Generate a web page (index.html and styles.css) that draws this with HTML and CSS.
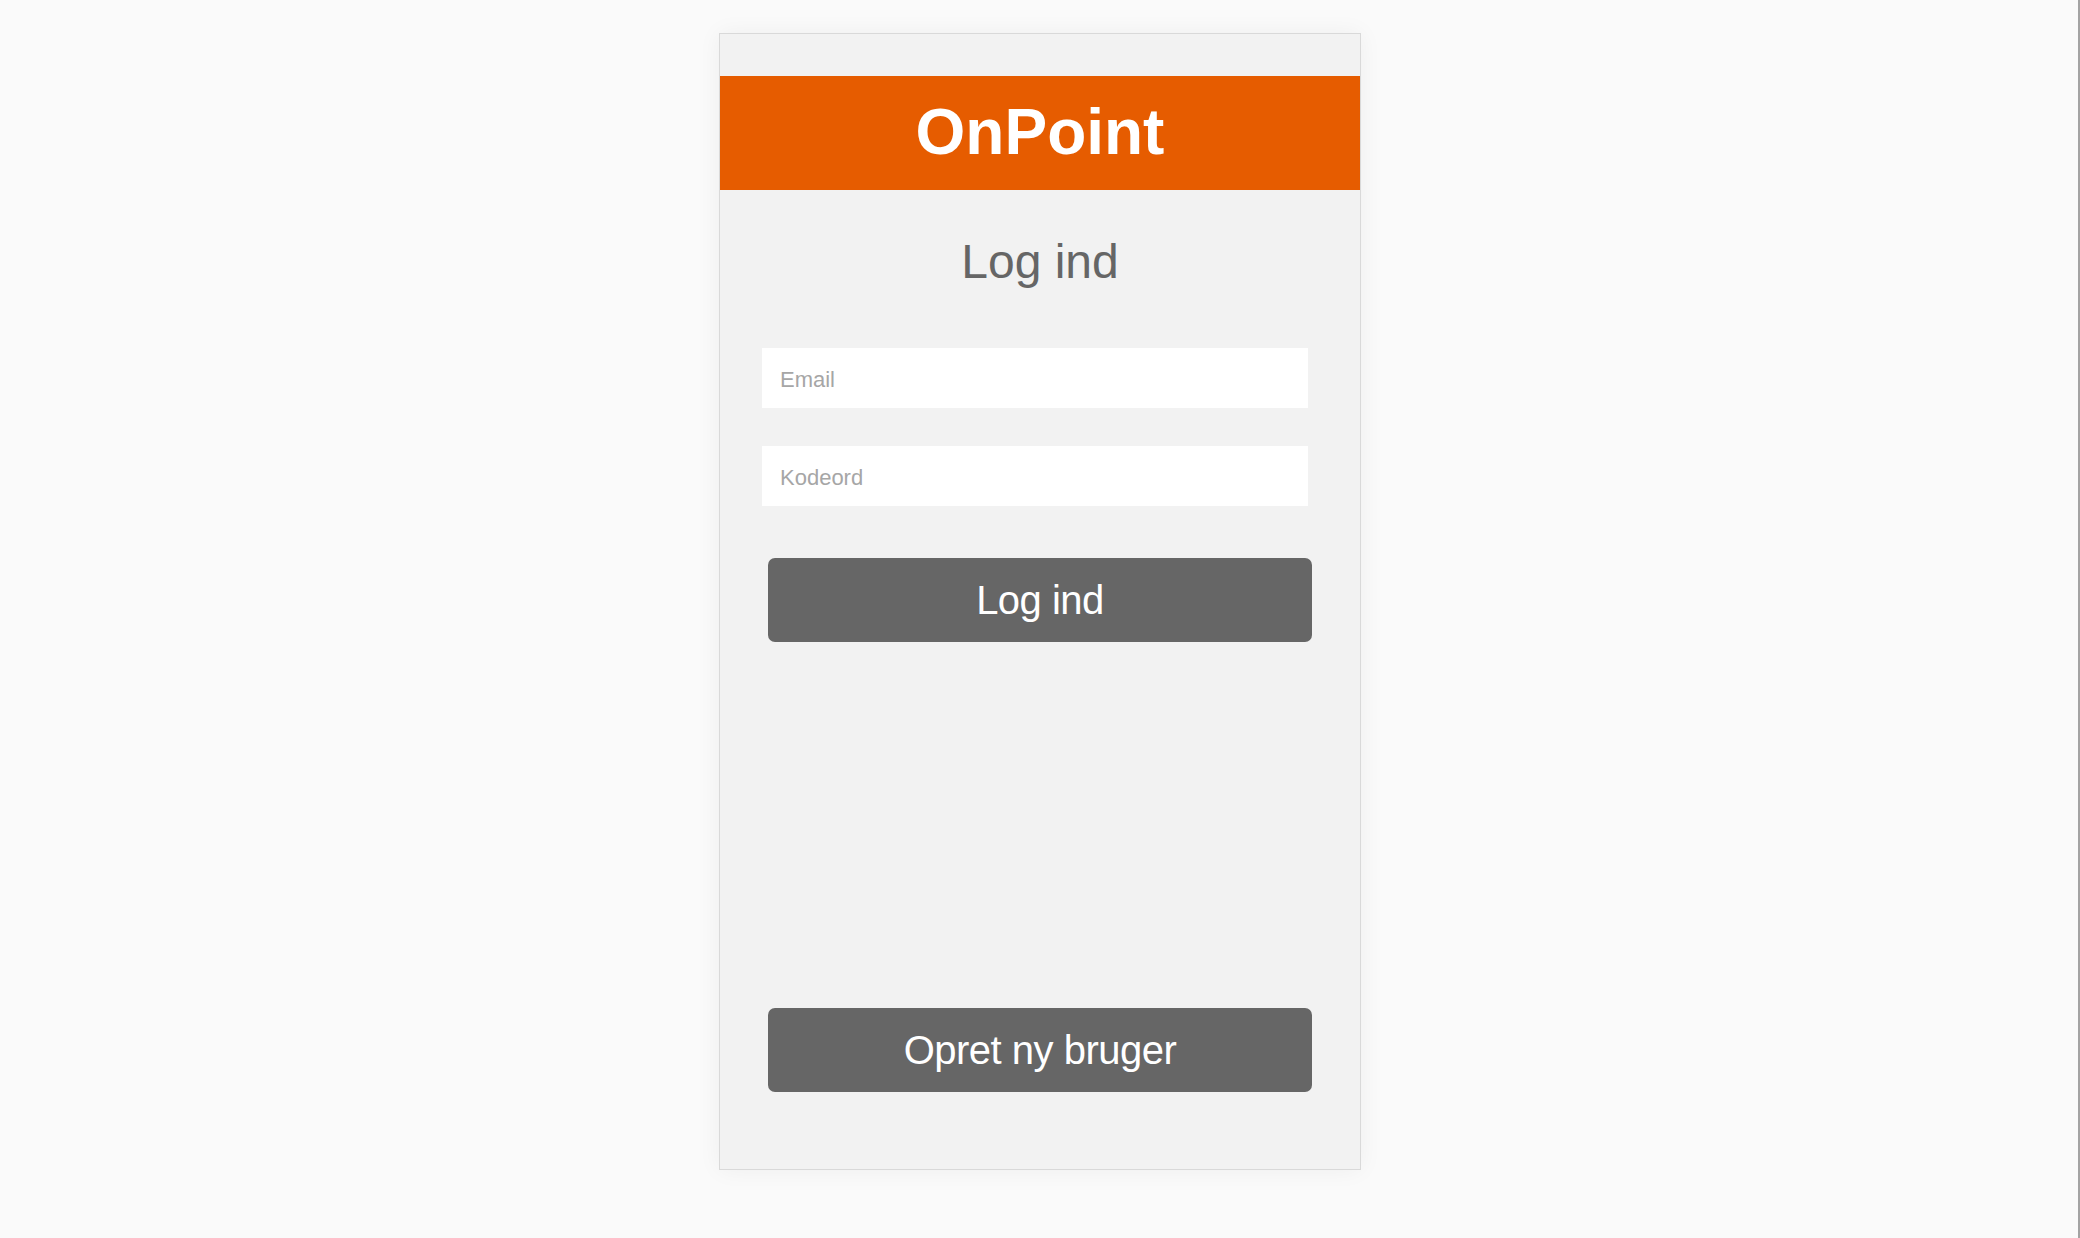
FILE: index.html
```html
<!DOCTYPE html>
<html lang="da">
<head>
    <meta charset="UTF-8">
    <meta name="viewport" content="width=device-width, initial-scale=1.0">
    <title>OnPoint - Log ind</title>
    <link rel="stylesheet" href="styles.css">
</head>
<body>
    <div class="app">
        <header class="brand">
            <h1>OnPoint</h1>
        </header>

        <h2 class="title">Log ind</h2>

        <form class="login-form" onsubmit="return false;">
            <input type="email" class="field" placeholder="Email">
            <input type="password" class="field field-last" placeholder="Kodeord">
            <button type="submit" class="btn">Log ind</button>
        </form>

        <button type="button" class="btn btn-signup">Opret ny bruger</button>
    </div>
</body>
</html>
```

FILE: styles.css
```css
* {
    box-sizing: border-box;
}

body {
    margin: 0;
    min-height: 100vh;
    background-color: #fafafa;
    border-right: 2px solid #a3a3a3;
    font-family: 'Liberation Sans', Arial, sans-serif;
    padding: 33px 0 0 2px;
}

/* Phone-sized container */
.app {
    width: 642px;
    height: 1137px;
    margin: 0 auto;
    padding-top: 42px;
    padding-bottom: 77px;
    background-color: #f2f2f2;
    border: 1px solid #d9d9d9;
    box-shadow: 0 0 22px rgba(0, 0, 0, 0.05);
    display: flex;
    flex-direction: column;
}

/* Orange header */
.brand {
    height: 114px;
    background-color: #e65c00;
    display: flex;
    justify-content: center;
    align-items: center;
}

.brand h1 {
    margin: 0;
    color: #fff;
    font-size: 64px;
    font-weight: bold;
    line-height: 1;
    padding-bottom: 2px;
}

.title {
    margin: 44px 0 0;
    text-align: center;
    color: #666;
    font-size: 48px;
    font-weight: normal;
    line-height: 56px;
}

.login-form {
    display: flex;
    flex-direction: column;
    margin-top: 58px;
}

.field {
    width: 546px;
    height: 60px;
    margin-left: 42px;
    margin-bottom: 38px;
    padding: 4px 18px 0;
    border: none;
    background-color: #fff;
    font-family: inherit;
    font-size: 22px;
    color: #333;
    outline: none;
}

.field::placeholder {
    color: #a6a6a6;
}

.field-last {
    margin-bottom: 52px;
}

.btn {
    width: 544px;
    height: 84px;
    margin-left: 48px;
    padding-top: 2px;
    border: none;
    border-radius: 7px;
    background-color: #666;
    color: #fff;
    font-family: inherit;
    font-size: 40px;
    letter-spacing: -0.5px;
    cursor: pointer;
}

.btn:hover {
    background-color: #5a5a5a;
}

.btn-signup {
    margin-top: auto;
}
```
